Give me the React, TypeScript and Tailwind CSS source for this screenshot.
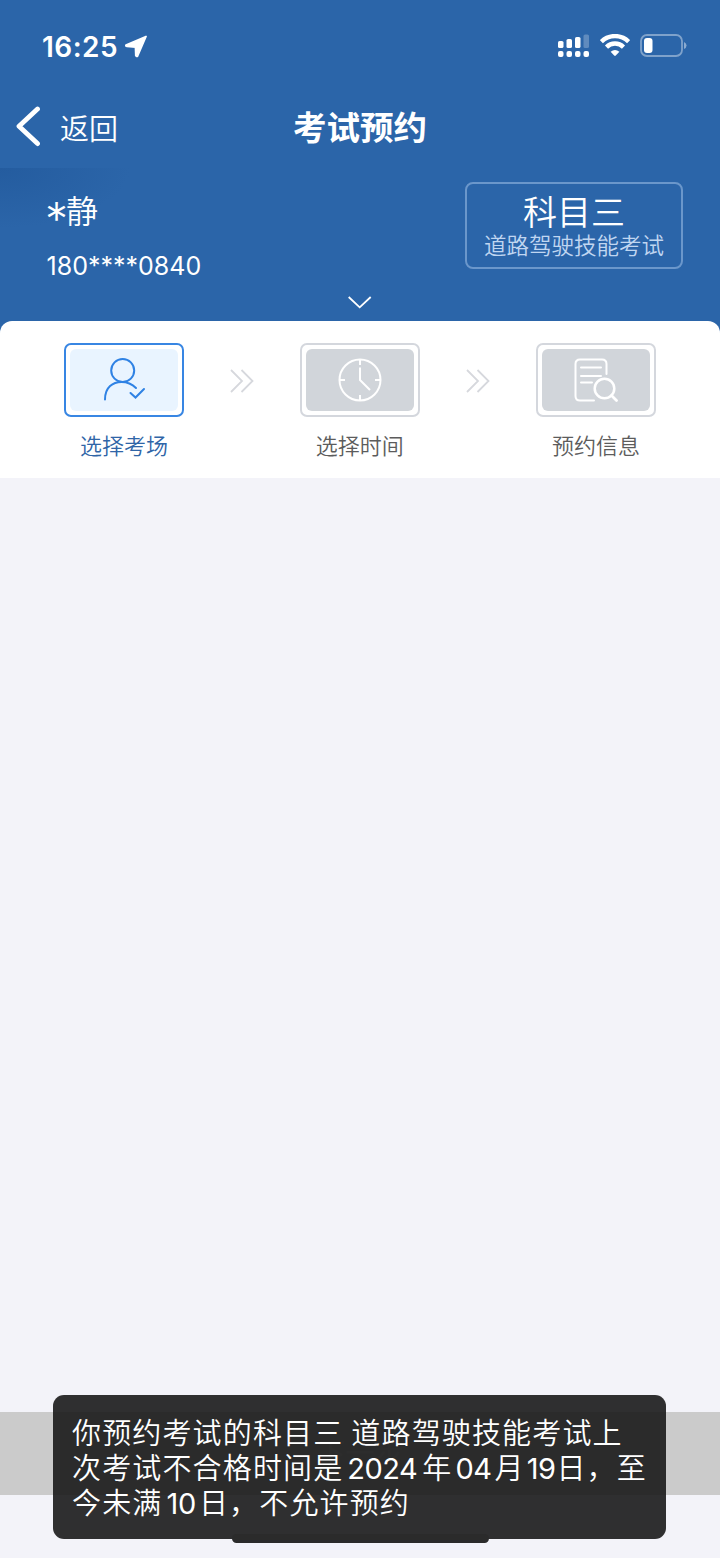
import type { ReactNode } from "react";

function StatusBar() {
  return (
    <div className="flex h-[92px] items-center justify-between pr-[33px] pl-[42px]">
      <div className="flex items-center gap-[7px]">
        <span className="pt-[1px] text-[28px] leading-none font-semibold tracking-[0.45px]">16:25</span>
        <svg width="24" height="24" viewBox="0 0 24 24" fill="#fff" stroke="#fff" strokeWidth="1.8" strokeLinejoin="round">
          <path d="M21 2.5 L1 11 Q.5 12.4 2 12.4 L10.5 13 L10.8 21.5 Q11.6 23 12.6 22 Z" />
        </svg>
      </div>
      <div className="flex items-center gap-[10px]">
        <svg width="33" height="26" viewBox="0 0 33 26" fill="#fff">
          <rect x="1" y="8" width="5.5" height="7" rx="1.6" />
          <rect x="9.5" y="6" width="5.5" height="9" rx="1.6" />
          <rect x="18" y="4" width="5.5" height="11" rx="1.6" />
          <rect x="26.5" y="1.5" width="5.5" height="13.5" rx="1.6" fillOpacity=".25" />
          <rect x="1" y="18" width="5.5" height="6" rx="2" />
          <rect x="9.5" y="18" width="5.5" height="6" rx="2" />
          <rect x="18" y="18" width="5.5" height="6" rx="2" />
          <rect x="26.5" y="18" width="5.5" height="6" rx="2" />
        </svg>
        <svg width="30" height="24" viewBox="0 0 30 24" fill="none" stroke="#fff" strokeWidth="4.4">
          <path d="M1.4 7.6 A19.5 19.5 0 0 1 28.6 7.6" />
          <path d="M6.5 13.1 A12 12 0 0 1 23.5 13.1" />
          <path d="M10.6 17.8 Q15 14 19.4 17.8 L15.8 21.6 Q15 22.4 14.2 21.6Z" fill="#fff" stroke="none" />
        </svg>
        <svg width="47" height="24" viewBox="0 0 47 24" fill="none">
          <rect x="1" y="1" width="41" height="21" rx="6" stroke="#fff" strokeOpacity=".4" strokeWidth="1.8" />
          <rect x="4" y="4" width="8.5" height="15" rx="3" fill="#fff" />
          <path d="M44 8 Q46.5 9 46.5 11.5 Q46.5 14 44 15Z" fill="#fff" fillOpacity=".45" />
        </svg>
      </div>
    </div>
  );
}

function NavBar() {
  return (
    <div className="grid h-[76px] grid-cols-[1fr_auto_1fr] items-center pb-[4px]">
      <div className="flex items-center pl-[14px]">
        <svg className="mb-[2px]" width="26" height="42" viewBox="0 0 26 42" fill="none" stroke="#fff" strokeWidth="4.8" strokeLinecap="round" strokeLinejoin="round">
          <path d="M23.5 3 L5 20.3 L23.5 37.6" />
        </svg>
        <span className="ml-[20px] pt-[3px] text-[29px] leading-[40px] font-[350]">返回</span>
      </div>
      <h1 className="text-[33.5px] leading-[40px] font-semibold">考试预约</h1>
    </div>
  );
}

function Candidate() {
  return (
    <section className="flex h-[153px] flex-col bg-[radial-gradient(ellipse_130px_60px_at_0_0,#245c9f,#2b65a9)]">
      <div className="flex h-[115px] justify-between pr-[37px] pl-[46px]">
        <div className="pt-[23px]">
          <div className="flex h-[42px] items-center text-[32px] leading-[42px] font-[350]">
            <span className="w-[20px] pt-[14px] text-[46px] font-light -indent-[1px]">*</span>
            <span>静</span>
          </div>
          <div className="mt-[16px] pl-[0.5px] text-[25px] leading-[34px]">180****0840</div>
        </div>
        <div className="mt-[14px] flex h-[87px] w-[218px] flex-col items-center rounded-[8px] border-2 border-[#6b97cb]">
          <span className="mt-[9px] text-[34px] leading-[40px] font-[350]">科目三</span>
          <span className="mt-[-3px] text-[22.5px] leading-[32px] font-[350] text-[#c0d6f1]">道路驾驶技能考试</span>
        </div>
      </div>
      <svg className="mx-auto mt-[12px] block shrink-0" width="26" height="16" viewBox="0 0 26 16" fill="none" stroke="#fff" strokeWidth="1.8">
        <path d="M1.7 2 L12.7 12.3 L23.7 2" />
      </svg>
    </section>
  );
}

function Step({ label, active = false, children }: { label: string; active?: boolean; children: ReactNode }) {
  return (
    <div className="flex w-[120px] flex-col items-center">
      <div className={`flex h-[74px] w-[120px] rounded-[7px] border-2 p-[4px] ${active ? "border-[#3886e3]" : "border-[#d4d7dd]"}`}>
        <div className={`flex flex-1 items-center justify-center rounded-[6px] ${active ? "bg-[#e9f4ff]" : "bg-[#d1d5da]"}`}>
          {children}
        </div>
      </div>
      <span className={`mt-[13px] text-[22px] leading-[32px] font-[350] ${active ? "pl-[1px] text-[#2f65a7]" : "text-[#5c5c5c]"}`}>{label}</span>
    </div>
  );
}

function Arrows() {
  return (
    <svg className="mt-[25px]" width="26" height="26" viewBox="0 0 26 26" fill="none" stroke="#d6d8dd" strokeWidth="1.8">
      <path d="M2 2 L13 13 L2 24 M12.5 2 L23.5 13 L12.5 24" />
    </svg>
  );
}

function Steps() {
  return (
    <section className="bg-[#2b65a9]">
      <div className="flex h-[157px] items-start justify-between rounded-t-[12px] bg-white pt-[22px] pr-[64px] pl-[63.5px]">
        <Step label="选择考场" active>
          <svg width="46" height="46" viewBox="0 0 46 46" fill="none" stroke="#2f82e4" strokeWidth="2" strokeLinecap="round">
            <circle cx="21.7" cy="13.5" r="11.5" />
            <path d="M4 42.5 C4 30 12 25 20.5 25 C26 25 31 27 35 31" />
            <path d="M29.5 36 L34.5 40.5 L43 32" />
          </svg>
        </Step>
        <Arrows />
        <Step label="选择时间">
          <svg width="44" height="44" viewBox="0 0 44 44" fill="none" stroke="#fff" strokeWidth="2">
            <circle cx="22" cy="22" r="20.5" />
            <path d="M22 2 V7 M22 37 V42 M2 22 H7 M37 22 H42 M22 9.5 V22 L32 32" />
          </svg>
        </Step>
        <Arrows />
        <Step label="预约信息">
          <svg width="44" height="44" viewBox="0 0 44 44" fill="none" stroke="#fff" strokeWidth="2" strokeLinecap="round">
            <path d="M32.5 16 V6 Q32.5 1.5 28 1.5 H6 Q1.5 1.5 1.5 6 V38 Q1.5 42.5 6 42.5 H20" />
            <path d="M7 9.5 H27 M7 18 H27 M7 24.5 H18" />
            <circle cx="30.5" cy="30.5" r="9.8" strokeWidth="2.5" />
            <path d="M37.5 37.5 L42.5 42.5" strokeWidth="2.8" />
          </svg>
        </Step>
      </div>
    </section>
  );
}

function Toast() {
  return (
    <div className="absolute top-[1395px] left-[53px] h-[144px] w-[613px] rounded-[11px] bg-[#1a1a1a]/90 px-[19px] pt-[21px] text-[29px] leading-[35px] font-[350] tracking-[1.15px] whitespace-nowrap text-white">
      <p>
        你预约考试的科目三<span className="ml-[8px]">道路驾驶技能考试上</span>
      </p>
      <p>
        次考试不合格时间是<span className="mr-[5px] ml-[4px] font-normal tracking-[-0.5px]">2024</span>年<span className="mx-[3px] font-normal tracking-[-0.5px]">04</span>月
        <span className="mr-[1px] ml-[2px] font-normal tracking-[-0.5px]">19</span>日，至
      </p>
      <p>
        今未满<span className="mr-[3px] ml-[4px] font-normal tracking-[-0.3px]">10</span>日，不允许预约
      </p>
    </div>
  );
}

export default function App() {
  return (
    <div className="relative flex h-[1558px] w-[720px] flex-col overflow-hidden bg-[#f3f3f9] font-['Inter','Noto_Sans_CJK_SC',sans-serif]">
      <header className="bg-[#2b65a9] text-white">
        <StatusBar />
        <NavBar />
        <Candidate />
      </header>
      <Steps />
      <main className="flex-1" />
      <button className="mb-[63px] flex h-[83px] shrink-0 items-center justify-center bg-[#cbcbcb] text-[29px] text-[#e0e0e0]">下一步</button>
      <Toast />
      <div className="absolute top-[1534px] left-[232px] h-[9px] w-[257px] rounded-full bg-[#2b2b2b]" />
    </div>
  );
}
